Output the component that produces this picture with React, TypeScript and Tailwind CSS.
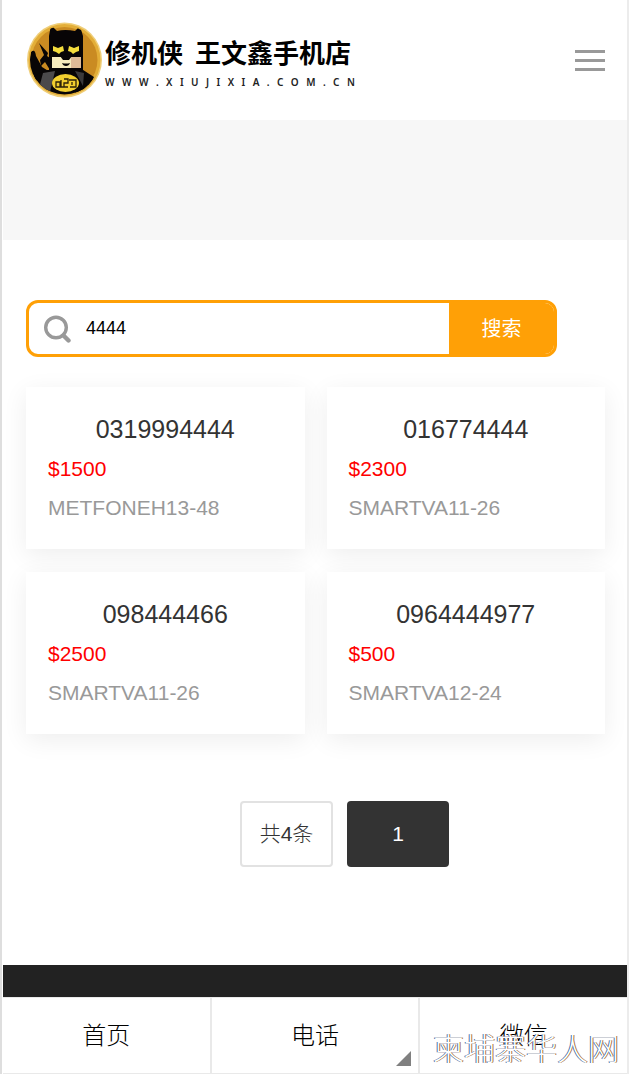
import { type ReactNode } from "react";

interface PhoneNumber {
  number: string;
  price: string;
  plan: string;
}

const NUMBERS: PhoneNumber[] = [
  { number: "0319994444", price: "$1500", plan: "METFONEH13-48" },
  { number: "016774444", price: "$2300", plan: "SMARTVA11-26" },
  { number: "098444466", price: "$2500", plan: "SMARTVA11-26" },
  { number: "0964444977", price: "$500", plan: "SMARTVA12-24" },
];

function LogoMark() {
  return (
    <svg viewBox="0 0 76 76" className="size-[76px] shrink-0" aria-hidden="true">
      <defs>
        <clipPath id="badge">
          <circle cx="38.5" cy="38" r="34.5" />
        </clipPath>
      </defs>
      <circle cx="38.5" cy="38" r="37.5" fill="#efce78" />
      <circle cx="38.5" cy="38" r="36" fill="#e3ae38" />
      <circle cx="38.5" cy="38" r="33" fill="#ca8b22" />
      <g clipPath="url(#badge)">
        {/* Capa */}
        <path d="M5 30 Q9 26 10 34 L16 45 L24 50 L9 60 L2 44 Z" fill="#080506" />
        <path d="M13 21 L22 31 L21 34 L24 36 L24 48 L19 40 L15 44 L14 38 L18 33 Z" fill="#080506" />
        <path d="M54 46 L68 55 L60 74 L48 74 Z" fill="#080506" />
        {/* Cuerpo */}
        <path d="M8 54 L20 48 L57 48 L63 76 L10 76 Z" fill="#080506" />
        <path d="M17 51 L29 49 L24 70 L12 70 Z" fill="#4b494b" />
        <path d="M49 49 L58 51 L57 64 Z" fill="#3b393b" />
        {/* Mascara */}
        <path d="M25 3 L31 9 Q39 7 49 9 L54 4 L57 14 L57 48 L23 48 L23 14 Z" fill="#080506" />
        <path d="M26 35 H45 V46 H26 Z" fill="#f6ebbd" />
        <path d="M45 35 H55 V46 H45 Z" fill="#dfbb97" />
        <path d="M34 34 H46 L43 38 H37 Z" fill="#080506" />
        <path d="M36 41 Q40 42 44 41 Q43 44 40 44 Q37 44 36 41 Z" fill="#080506" />
        <path d="M27 24 L32 26 L37 24 L38 29 L35 30 L33 32 L30 30 L27 29 Z" fill="#f4dc3c" />
        <path d="M53 24 L48 26 L43 24 L42 29 L45 30 L47 32 L50 30 L53 29 Z" fill="#f4dc3c" />
      </g>
      <ellipse cx="39.5" cy="61" rx="13.5" ry="9" fill="#f2cf2f" />
      <path
        d="M30 60 H34 V65 H30 Z M35 58 V65 H38 M38 57 H42 V61 H38 V65 H42 M43 58 H50 V65 H44 M46 60 V63"
        fill="none"
        stroke="#2a2108"
        strokeWidth="1.3"
      />
    </svg>
  );
}

function SearchIcon() {
  return (
    <svg viewBox="0 0 28 28" className="size-7 shrink-0" fill="none" stroke="#999" aria-hidden="true">
      <circle cx="13" cy="12.5" r="10.3" strokeWidth="3.4" />
      <path d="M20.5 20.5 L25.5 25.5" strokeWidth="4.4" strokeLinecap="round" />
    </svg>
  );
}

function NumberCard({ item }: { item: PhoneNumber }) {
  return (
    <a href={`#${item.number}`} className="block bg-white px-[22px] py-[22px] shadow-[0_6px_24px_rgba(0,0,0,0.07)]">
      <h2 className="text-center text-[25px] leading-10 text-[#333]">{item.number}</h2>
      <p className="text-[21px] leading-[39px] text-[#f00]">{item.price}</p>
      <p className="text-[21px] leading-[39px] text-[#999]">{item.plan}</p>
    </a>
  );
}

function NavItem({ href, children }: { href: string; children: ReactNode }) {
  return (
    <a href={href} className="relative flex-1 border-r-2 border-[#e9e9e9] text-center text-2xl font-light leading-[75px] text-black last:border-r-0">
      {children}
    </a>
  );
}

export default function App() {
  return (
    <div className="flex min-h-screen flex-col border-x-2 border-l-[#dedede] border-r-[#ececec] bg-white pl-px font-['Liberation_Sans','Noto_Sans_CJK_SC',sans-serif]">
      <header className="flex h-[120px] items-center justify-between pl-[23px] pr-[22px]">
        <a href="#home" className="flex items-center gap-[3px] text-black">
          <LogoMark />
          <span className="flex flex-col pt-2">
            <span className="flex gap-3 text-[26px] font-bold leading-9">
              <span>修机侠</span>
              <span>王文鑫手机店</span>
            </span>
            <span className="flex w-[250px] justify-between font-['Noto_Sans'] text-[10px] font-semibold leading-5 text-[#222]" aria-label="WWW.XIUJIXIA.COM.CN">
              {"WWW.XIUJIXIA.COM.CN".split("").map((char, i) => (
                <span key={i}>{char}</span>
              ))}
            </span>
          </span>
        </a>
        <button type="button" aria-label="菜单" className="flex w-[30px] flex-col gap-[6px]">
          <span className="h-[3px] bg-[#999]" />
          <span className="h-[3px] bg-[#999]" />
          <span className="h-[3px] bg-[#999]" />
        </button>
      </header>

      <div className="h-[120px] bg-[#f7f7f7]" />

      <main className="flex-1 pb-[98px] pl-[23px] pr-[22px] pt-[60px]">
        <form className="mr-12 flex h-[57px] overflow-hidden rounded-xl border-[3px] border-[#ffa006]" onSubmit={(e) => e.preventDefault()}>
          <label className="flex min-w-0 flex-1 items-center gap-[15px] pl-[14px]">
            <SearchIcon />
            <input
              type="text"
              defaultValue="4444"
              aria-label="搜索号码"
              className="h-full min-w-0 flex-1 text-lg text-black outline-none"
            />
          </label>
          <button type="submit" className="w-[105px] bg-[#ffa006] text-xl text-white">
            搜索
          </button>
        </form>

        <div className="mt-[30px] grid grid-cols-2 gap-x-[22px] gap-y-[23px]">
          {NUMBERS.map((item) => (
            <NumberCard key={item.number} item={item} />
          ))}
        </div>

        {/* Paginacion */}
        <div className="mt-[67px] flex justify-center gap-[14px] pl-[58px] text-[21px]">
          <span className="flex h-[66px] w-[93px] items-center justify-center rounded border-2 border-[#e2e2e2] font-light text-[#333]">
            共4条
          </span>
          <button type="button" aria-current="page" className="h-[66px] w-[102px] rounded bg-[#333] text-white">
            1
          </button>
        </div>
      </main>

      <footer className="relative">
        <div className="h-8 bg-[#222]" />
        <nav className="flex border-y border-[#e9e9e9]">
          <NavItem href="#home">首页</NavItem>
          <NavItem href="#phone">
            电话
            <svg viewBox="0 0 15 15" className="absolute bottom-[7px] right-[7px] size-[15px]" aria-hidden="true">
              <path d="M15 0 V15 H0 Z" fill="#808080" />
            </svg>
          </NavItem>
          <NavItem href="#wechat">微信</NavItem>
        </nav>
        <span className="pointer-events-none absolute bottom-1 right-2 text-[31px] font-light leading-10 text-white [text-shadow:-1px_0_#4a6fa5,1px_0_#a8703c]">
          柬埔寨华人网
        </span>
      </footer>
    </div>
  );
}
